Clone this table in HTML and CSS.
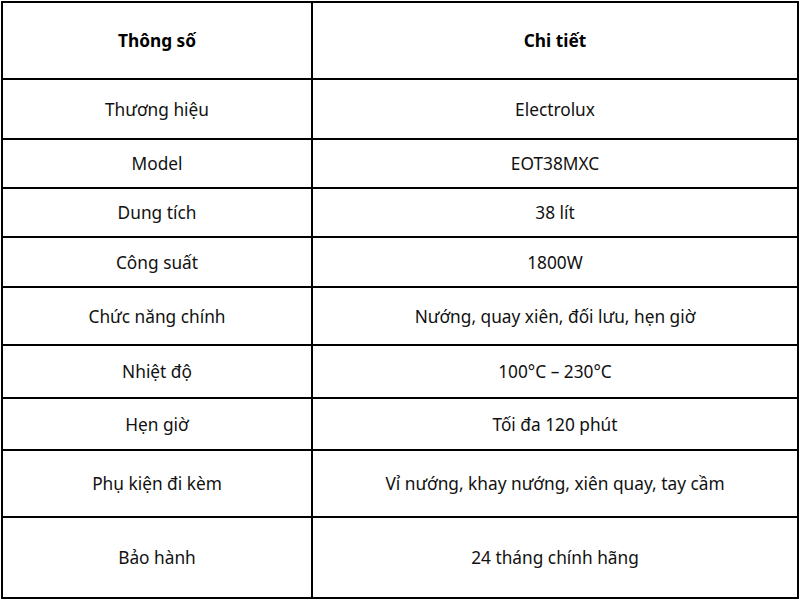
FILE: index.html
```html
<!DOCTYPE html>
<html lang="vi">
<head>
<meta charset="utf-8">
<link rel="stylesheet" href="styles.css">
</head>
<body>
<table class="spec">
  <tr class="r-head"><th class="c1">Thông số</th><th class="c2">Chi tiết</th></tr>
  <tr class="r1"><td>Thương hiệu</td><td>Electrolux</td></tr>
  <tr class="r2"><td>Model</td><td>EOT38MXC</td></tr>
  <tr class="r3"><td>Dung tích</td><td>38 lít</td></tr>
  <tr class="r4"><td>Công suất</td><td>1800W</td></tr>
  <tr class="r5"><td>Chức năng chính</td><td>Nướng, quay xiên, đối lưu, hẹn giờ</td></tr>
  <tr class="r6"><td>Nhiệt độ</td><td>100°C – 230°C</td></tr>
  <tr class="r7"><td>Hẹn giờ</td><td>Tối đa 120 phút</td></tr>
  <tr class="r8"><td>Phụ kiện đi kèm</td><td>Vỉ nướng, khay nướng, xiên quay, tay cầm</td></tr>
  <tr class="r9"><td>Bảo hành</td><td>24 tháng chính hãng</td></tr>
</table>
</body>
</html>
```
FILE: styles.css
```css
html, body {
  margin: 0;
  padding: 0;
  background: #fff;
}
body {
  font-family: "Noto Sans", "Open Sans", sans-serif;
  font-size: 17.3px;
  line-height: 1.2;
  color: #111;
}
.spec {
  margin: 1px 0 0 1px;
  width: 798px;
  border-collapse: separate;
  border-spacing: 0;
  border-top: 2px solid #000;
  border-left: 2px solid #000;
  table-layout: fixed;
}
.spec th, .spec td {
  border-right: 2px solid #000;
  border-bottom: 2px solid #000;
  text-align: center;
  vertical-align: middle;
  padding: 2px 0 0 0;
  box-sizing: border-box;
}
.spec th {
  font-weight: 700;
  color: #000;
}
.c1 { width: 310px; }
.r-head th { height: 77px; }
.r1 td { height: 60px; }
.r2 td { height: 49px; }
.r3 td { height: 49px; }
.r4 td { height: 50px; }
.r5 td { height: 58px; }
.r6 td { height: 53px; }
.r7 td { height: 52px; }
.r8 td { height: 67px; }
.r9 td { height: 81px; }
```
